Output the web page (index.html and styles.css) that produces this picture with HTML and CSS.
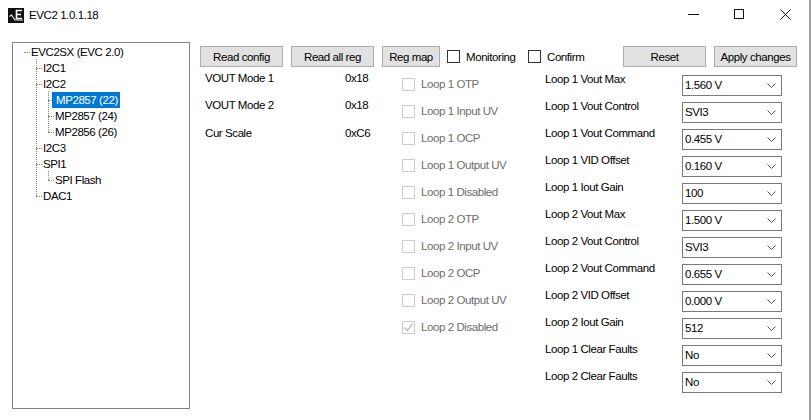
FILE: index.html
```html
<!DOCTYPE html>
<html lang="en">
<head>
<meta charset="utf-8">
<title>EVC2 1.0.1.18</title>
<link rel="stylesheet" href="styles.css">
</head>
<body>
<div class="window">
  <header class="titlebar">
    <svg class="app-icon" width="16" height="15" viewBox="0 0 16 15" aria-hidden="true">
      <rect width="16" height="15" fill="#111"/>
      <path d="M14 2.500H8.500v8H14M8.500 6.500H13" fill="none" stroke="#fff" stroke-width="1.600"/>
      <path d="M1.500 8.500l2-1.500 3.500 5h8" fill="none" stroke="#e8e8e8" stroke-width="1.200"/>
    </svg>
    <span class="title">EVC2 1.0.1.18</span>
    <div class="controls">
      <svg width="11" height="11" viewBox="0 0 11 11" aria-hidden="true"><path d="M0 5.500h11" stroke="#111"/></svg>
      <svg width="11" height="11" viewBox="0 0 11 11" aria-hidden="true"><rect x=".5" y=".5" width="9" height="9" fill="none" stroke="#111"/></svg>
      <svg width="11" height="11" viewBox="0 0 11 11" aria-hidden="true"><path d="M.5.500l10 10M10.500.500l-10 10" stroke="#111" fill="none"/></svg>
    </div>
  </header>
  <div class="content">
    <nav class="tree">
      <ul class="tree-root">
        <li class="node root-node"><span class="tree-label">EVC2SX (EVC 2.0)</span>
          <ul class="branch">
            <li class="node"><span class="tree-label">I2C1</span></li>
            <li class="node"><span class="tree-label">I2C2</span>
              <ul class="branch">
                <li class="node"><span class="tree-label selected">MP2857 (22)</span></li>
                <li class="node"><span class="tree-label">MP2857 (24)</span></li>
                <li class="node"><span class="tree-label">MP2856 (26)</span></li>
              </ul>
            </li>
            <li class="node"><span class="tree-label">I2C3</span></li>
            <li class="node"><span class="tree-label">SPI1</span>
              <ul class="branch">
                <li class="node"><span class="tree-label">SPI Flash</span></li>
              </ul>
            </li>
            <li class="node"><span class="tree-label">DAC1</span></li>
          </ul>
        </li>
      </ul>
    </nav>
    <main class="main">
      <div class="toolbar">
        <button class="btn btn-wide">Read config</button>
        <button class="btn btn-wide">Read all reg</button>
        <button class="btn btn-map">Reg map</button>
        <label class="tool-check monitoring"><span class="box"></span>Monitoring</label>
        <label class="tool-check confirm"><span class="box"></span>Confirm</label>
        <button class="btn btn-wide reset">Reset</button>
        <button class="btn btn-wide">Apply changes</button>
      </div>
      <div class="columns">
        <section class="regs">
          <div class="reg"><span>VOUT Mode 1</span><span>0x18</span></div>
          <div class="reg"><span>VOUT Mode 2</span><span>0x18</span></div>
          <div class="reg"><span>Cur Scale</span><span>0xC6</span></div>
        </section>
        <section class="flags">
          <div class="flag"><span class="box"></span><span class="flag-text">Loop 1 OTP</span></div>
          <div class="flag"><span class="box"></span><span class="flag-text">Loop 1 Input UV</span></div>
          <div class="flag"><span class="box"></span><span class="flag-text">Loop 1 OCP</span></div>
          <div class="flag"><span class="box"></span><span class="flag-text">Loop 1 Output UV</span></div>
          <div class="flag"><span class="box"></span><span class="flag-text">Loop 1 Disabled</span></div>
          <div class="flag"><span class="box"></span><span class="flag-text">Loop 2 OTP</span></div>
          <div class="flag"><span class="box"></span><span class="flag-text">Loop 2 Input UV</span></div>
          <div class="flag"><span class="box"></span><span class="flag-text">Loop 2 OCP</span></div>
          <div class="flag"><span class="box"></span><span class="flag-text">Loop 2 Output UV</span></div>
          <div class="flag"><span class="box"><svg width="11" height="11" viewBox="0 0 11 11" aria-hidden="true"><path d="M1.500 5.500l3 3 5-7" fill="none" stroke="#b4b4b4" stroke-width="1.200"/></svg></span><span class="flag-text">Loop 2 Disabled</span></div>
        </section>
        <section class="fields">
          <div class="field"><span class="field-label">Loop 1 Vout Max</span><div class="combo">1.560 V<svg class="chev" width="9" height="5" viewBox="0 0 9 5" aria-hidden="true"><path d="M.5.500l4 4 4-4" fill="none" stroke="#555"/></svg></div></div>
          <div class="field"><span class="field-label">Loop 1 Vout Control</span><div class="combo">SVI3<svg class="chev" width="9" height="5" viewBox="0 0 9 5" aria-hidden="true"><path d="M.5.500l4 4 4-4" fill="none" stroke="#555"/></svg></div></div>
          <div class="field"><span class="field-label">Loop 1 Vout Command</span><div class="combo">0.455 V<svg class="chev" width="9" height="5" viewBox="0 0 9 5" aria-hidden="true"><path d="M.5.500l4 4 4-4" fill="none" stroke="#555"/></svg></div></div>
          <div class="field"><span class="field-label">Loop 1 VID Offset</span><div class="combo">0.160 V<svg class="chev" width="9" height="5" viewBox="0 0 9 5" aria-hidden="true"><path d="M.5.500l4 4 4-4" fill="none" stroke="#555"/></svg></div></div>
          <div class="field"><span class="field-label">Loop 1 Iout Gain</span><div class="combo">100<svg class="chev" width="9" height="5" viewBox="0 0 9 5" aria-hidden="true"><path d="M.5.500l4 4 4-4" fill="none" stroke="#555"/></svg></div></div>
          <div class="field"><span class="field-label">Loop 2 Vout Max</span><div class="combo">1.500 V<svg class="chev" width="9" height="5" viewBox="0 0 9 5" aria-hidden="true"><path d="M.5.500l4 4 4-4" fill="none" stroke="#555"/></svg></div></div>
          <div class="field"><span class="field-label">Loop 2 Vout Control</span><div class="combo">SVI3<svg class="chev" width="9" height="5" viewBox="0 0 9 5" aria-hidden="true"><path d="M.5.500l4 4 4-4" fill="none" stroke="#555"/></svg></div></div>
          <div class="field"><span class="field-label">Loop 2 Vout Command</span><div class="combo">0.655 V<svg class="chev" width="9" height="5" viewBox="0 0 9 5" aria-hidden="true"><path d="M.5.500l4 4 4-4" fill="none" stroke="#555"/></svg></div></div>
          <div class="field"><span class="field-label">Loop 2 VID Offset</span><div class="combo">0.000 V<svg class="chev" width="9" height="5" viewBox="0 0 9 5" aria-hidden="true"><path d="M.5.500l4 4 4-4" fill="none" stroke="#555"/></svg></div></div>
          <div class="field"><span class="field-label">Loop 2 Iout Gain</span><div class="combo">512<svg class="chev" width="9" height="5" viewBox="0 0 9 5" aria-hidden="true"><path d="M.5.500l4 4 4-4" fill="none" stroke="#555"/></svg></div></div>
          <div class="field"><span class="field-label">Loop 1 Clear Faults</span><div class="combo">No<svg class="chev" width="9" height="5" viewBox="0 0 9 5" aria-hidden="true"><path d="M.5.500l4 4 4-4" fill="none" stroke="#555"/></svg></div></div>
          <div class="field"><span class="field-label">Loop 2 Clear Faults</span><div class="combo">No<svg class="chev" width="9" height="5" viewBox="0 0 9 5" aria-hidden="true"><path d="M.5.500l4 4 4-4" fill="none" stroke="#555"/></svg></div></div>
        </section>
      </div>
    </main>
  </div>
</div>
</body>
</html>
```

FILE: styles.css
```css
* { box-sizing: border-box; }
html, body { margin: 0; padding: 0; }
body {
  width: 811px;
  height: 420px;
  overflow: hidden;
  background: #fff;
  font-family: "Liberation Sans", Arial, sans-serif;
  font-size: 11.5px;
  letter-spacing: -0.42px;
  color: #000;
}
.window {
  width: 811px;
  height: 420px;
  border-right: 2px solid #a3a3a3;
  display: flex;
  flex-direction: column;
}
.titlebar {
  height: 30px;
  display: flex;
  align-items: center;
  padding-left: 8px;
}
.app-icon { flex: none; }
.title { margin-left: 5px; }
.controls {
  margin-left: auto;
  display: flex;
  gap: 35px;
  padding-right: 18px;
  margin-top: -1px;
}
.content {
  display: flex;
  padding: 12px 0 0 12px;
}
.tree {
  width: 178px;
  height: 367px;
  border: 1px solid #82828a;
  flex: none;
  padding-top: 1px;
}
.tree ul { list-style: none; margin: 0; padding: 0; }
.branch { padding-left: 12px !important; position: relative; }
.branch::before {
  content: "";
  position: absolute;
  left: 5px;
  top: -1px;
  bottom: 8px;
  border-left: 1px dotted #888;
}
.tree-root { padding-left: 18px !important; }
.node { position: relative; }
.node::before {
  content: "";
  position: absolute;
  left: -7px;
  top: 8px;
  width: 6px;
  border-top: 1px dotted #888;
}
.tree-label {
  display: inline-block;
  height: 16px;
  line-height: 16px;
  white-space: nowrap;
  vertical-align: top;
}
.selected {
  background: #0078d7;
  color: #fff;
  margin-left: -3px;
  padding: 0 2px 0 4px;
}
.main { margin-left: 10px; width: 600px; padding-top: 4px; }
.toolbar { display: flex; align-items: center; height: 21px; }
.btn {
  height: 21px;
  padding: 0;
  margin-right: 8px;
  background: #e1e1e1;
  border: 1px solid #adadad;
  font: inherit;
  letter-spacing: inherit;
  color: #000;
  flex: none;
}
.btn-wide { width: 83px; }
.btn-map { width: 58px; margin-right: 7px; }
.tool-check { display: flex; align-items: center; flex: none; }
.monitoring { width: 81px; }
.confirm { width: 95px; }
.tool-check .box { border-color: #333; margin-right: 6px; }
.box {
  width: 13px;
  height: 13px;
  flex: none;
  display: flex;
  align-items: center;
  justify-content: center;
  border: 1px solid #ccc;
  background: #fff;
}
.columns { display: flex; margin-top: 4px; }
.regs { width: 202px; padding-left: 5px; }
.reg {
  height: 27px;
  display: flex;
  line-height: 14px;
}
.reg:nth-child(3) { padding-top: 1px; }
.reg span:first-child { width: 140px; }
.flags { width: 143px; padding-top: 1px; }
.flag {
  height: 27px;
  display: flex;
  align-items: flex-start;
  padding-top: 6px;
  color: #6d6d6d;
  line-height: 14px;
  white-space: nowrap;
}
.flag .box { margin-right: 6px; }
.flag-text { margin-top: -1px; }
.fields { padding-top: 1px; }
.field { height: 27px; display: flex; align-items: flex-start; }
.field-label { width: 137px; line-height: 14px; white-space: nowrap; }
.combo {
  width: 100px;
  height: 21px;
  margin-top: 3px;
  border: 1px solid #7a7a7a;
  padding-left: 2px;
  line-height: 19px;
  display: flex;
  align-items: center;
  justify-content: space-between;
}
.chev { margin-right: 5px; flex: none; }
```
